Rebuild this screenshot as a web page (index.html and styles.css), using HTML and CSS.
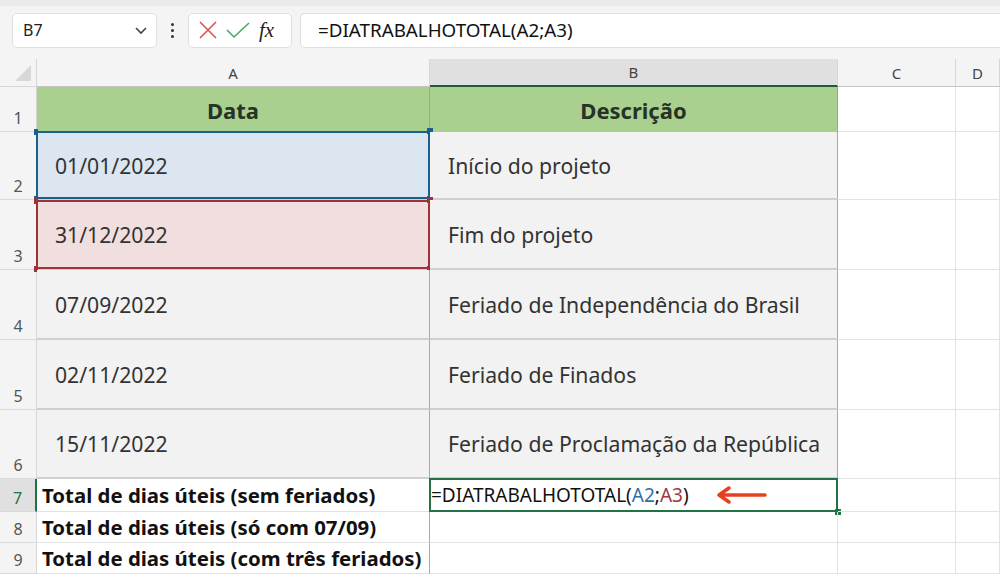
FILE: index.html
```html
<!DOCTYPE html>
<html>
<head>
    <title>DIATRABALHOTOTAL</title>
    <link rel="stylesheet" href="styles.css">
</head>
<body>
    <!-- Formula bar -->
    <div class="toolbar">
        <div class="namebox">
            <span>B7</span>
            <svg class="chevron" width="14" height="14" viewBox="0 0 14 14"><path d="M2 5 L7 10 L12 5" fill="none" stroke="#444" stroke-width="1.6"/></svg>
        </div>
        <div class="dots"><i></i><i></i><i></i></div>
        <div class="fxbox">
            <svg width="22" height="22" viewBox="0 0 22 22"><path d="M3 3 L19 19 M19 3 L3 19" stroke="#d9534f" stroke-width="1.6" fill="none"/></svg>
            <svg width="26" height="22" viewBox="0 0 26 22"><path d="M2 11 L9 18 L24 4" stroke="#4aa564" stroke-width="1.6" fill="none"/></svg>
            <span class="fx">fx</span>
        </div>
        <div class="formula">=DIATRABALHOTOTAL(A2;A3)</div>
    </div>

    <!-- Sheet -->
    <div class="sheet">
        <div class="corner"><span></span></div>
        <div class="colhead">A</div>
        <div class="colhead active">B</div>
        <div class="colhead">C</div>
        <div class="colhead">D</div>

        <div class="rowhead">1</div>
        <div class="cell title">Data</div>
        <div class="cell title">Descrição</div>
        <div class="cell"></div>
        <div class="cell"></div>

        <div class="rowhead">2</div>
        <div class="cell data ref-blue">01/01/2022
            <div class="sel sel-blue"><b class="h tl"></b><b class="h tr"></b><b class="h bl"></b><b class="h br"></b></div>
        </div>
        <div class="cell data">Início do projeto</div>
        <div class="cell"></div>
        <div class="cell"></div>

        <div class="rowhead">3</div>
        <div class="cell data ref-red">31/12/2022
            <div class="sel sel-red"><b class="h tl"></b><b class="h tr"></b><b class="h bl"></b><b class="h br"></b></div>
        </div>
        <div class="cell data">Fim do projeto</div>
        <div class="cell"></div>
        <div class="cell"></div>

        <div class="rowhead">4</div>
        <div class="cell data">07/09/2022</div>
        <div class="cell data">Feriado de Independência do Brasil</div>
        <div class="cell"></div>
        <div class="cell"></div>

        <div class="rowhead">5</div>
        <div class="cell data">02/11/2022</div>
        <div class="cell data">Feriado de Finados</div>
        <div class="cell"></div>
        <div class="cell"></div>

        <div class="rowhead">6</div>
        <div class="cell data">15/11/2022</div>
        <div class="cell data">Feriado de Proclamação da República</div>
        <div class="cell"></div>
        <div class="cell"></div>

        <div class="rowhead active">7</div>
        <div class="cell total">Total de dias úteis (sem feriados)</div>
        <div class="cell edit">=DIATRABALHOTOTAL(<span class="a2">A2</span>;<span class="a3">A3</span>)
            <svg class="arrow" width="54" height="20" viewBox="0 0 54 20"><path d="M50 10 L6 10 M14 3 L4 10 L14 17" stroke="#e8401f" stroke-width="3.5" fill="none" stroke-linecap="round" stroke-linejoin="round"/></svg>
            <div class="sel sel-green"><b class="h br"></b></div>
        </div>
        <div class="cell"></div>
        <div class="cell"></div>

        <div class="rowhead">8</div>
        <div class="cell total">Total de dias úteis (só com 07/09)</div>
        <div class="cell"></div>
        <div class="cell"></div>
        <div class="cell"></div>

        <div class="rowhead">9</div>
        <div class="cell total">Total de dias úteis (com três feriados)</div>
        <div class="cell"></div>
        <div class="cell"></div>
        <div class="cell"></div>
    </div>
</body>
</html>
```

FILE: styles.css
```css
body {
    margin: 0;
    font-family: "Noto Sans", "Open Sans", sans-serif;
    background-color: #f4f4f4;
    overflow: hidden;
}

.toolbar {
    display: flex;
    align-items: center;
    height: 59px;
    padding: 0 0 5px 12px;
    box-sizing: border-box;
    border-top: 6px solid #ebebeb;
}

.namebox,
.fxbox,
.formula {
    height: 35px;
    background-color: #fff;
    border: 1px solid #e0e0e0;
    border-radius: 5px;
    box-sizing: border-box;
    display: flex;
    align-items: center;
}

.namebox {
    width: 145px;
    padding: 0 8px 0 10px;
    justify-content: space-between;
    font-size: 16px;
    color: #222;
}

.dots {
    width: 31px;
    display: flex;
    flex-direction: column;
    align-items: center;
    gap: 3px;
}

.dots i {
    width: 3px;
    height: 3px;
    border-radius: 50%;
    background-color: #333;
}

.fxbox {
    width: 104px;
    padding: 0 6px 0 8px;
    gap: 6px;
}

.fx {
    font-family: "Liberation Serif", serif;
    font-style: italic;
    font-size: 21px;
    color: #222;
    margin-left: 2px;
}

.formula {
    flex: 1;
    margin-left: 8px;
    border-right: none;
    border-radius: 5px 0 0 5px;
    padding-left: 17px;
    font-size: 18.8px;
    color: #111;
}

.sheet {
    display: grid;
    grid-template-columns: 37px 393px 408px 118px 44px;
    grid-template-rows: 28px 45px 68px 70px 70px 70px 69px 33px 31px 31px;
    background-color: #fff;
}

.corner {
    background-color: #f4f4f4;
    border-right: 1px solid #d6d6d6;
    border-bottom: 1px solid #d6d6d6;
    position: relative;
}

.corner span {
    position: absolute;
    right: 5px;
    bottom: 5px;
    border-left: 16px solid transparent;
    border-bottom: 16px solid #d8d8d8;
}

.colhead {
    background-color: #f4f4f4;
    border-right: 1px solid #d6d6d6;
    border-bottom: 1px solid #c4c4c4;
    display: flex;
    align-items: center;
    justify-content: center;
    font-size: 15px;
    color: #444;
}

.colhead.active {
    background-color: #e0e0e0;
    border-bottom: 2px solid #1e5b35;
}

.rowhead {
    background-color: #f4f4f4;
    border-right: 1px solid #d6d6d6;
    border-bottom: 1px solid #dadada;
    display: flex;
    align-items: flex-end;
    justify-content: center;
    padding-bottom: 2px;
    box-sizing: border-box;
    font-size: 16px;
    color: #555;
}

.rowhead.active {
    background-color: #e0e0e0;
    border-right: 2px solid #217346;
    color: #217346;
}

.cell {
    position: relative;
    border-right: 1px solid #e2e2e2;
    border-bottom: 1px solid #e2e2e2;
    display: flex;
    align-items: center;
    box-sizing: border-box;
}

.title {
    background-color: #a9d08e;
    border-right-color: #8fb577;
    justify-content: center;
    font-weight: bold;
    font-size: 22px;
    color: #263326;
    border-bottom: none;
}

.data {
    background-color: #f2f2f2;
    border-right: 1px solid #a8a8a8;
    border-bottom: 2px solid #cfcfcf;
    padding-left: 18px;
    font-size: 21.2px;
    color: #333;
}

.ref-blue {
    background-color: #dce6f0;
}

.ref-red {
    background-color: #f1dfdf;
}

.total {
    padding-left: 5px;
    font-weight: bold;
    font-size: 20.4px;
    color: #111;
    white-space: nowrap;
    border-right-color: #a8a8a8;
}

.edit {
    padding-left: 1px;
    font-size: 19px;
    color: #111;
    white-space: nowrap;
}

.edit .a2 {
    color: #2f6fa7;
}

.edit .a3 {
    color: #9b3a3e;
}

.arrow {
    margin-left: 26px;
}

.sel {
    position: absolute;
    left: -1px;
    top: -1px;
    right: -1px;
    bottom: -1px;
    border: 2px solid;
    pointer-events: none;
}

.sel-blue {
    border-color: #1d5f8c;
}

.sel-red {
    border-color: #9b343a;
    top: 0;
}

.sel-green {
    border-color: #217346;
    top: -1px;
}

.h {
    position: absolute;
    width: 6px;
    height: 6px;
}

.sel-blue .h {
    background-color: #1d5f8c;
}

.sel-red .h {
    background-color: #9b343a;
}

.sel-green .h {
    background-color: #217346;
}

.tl { left: -4px; top: -4px; width: 4px; }
.tr { right: -5px; top: -5px; }
.bl { left: -4px; bottom: -5px; width: 4px; }
.br { right: -5px; bottom: -5px; }
```
